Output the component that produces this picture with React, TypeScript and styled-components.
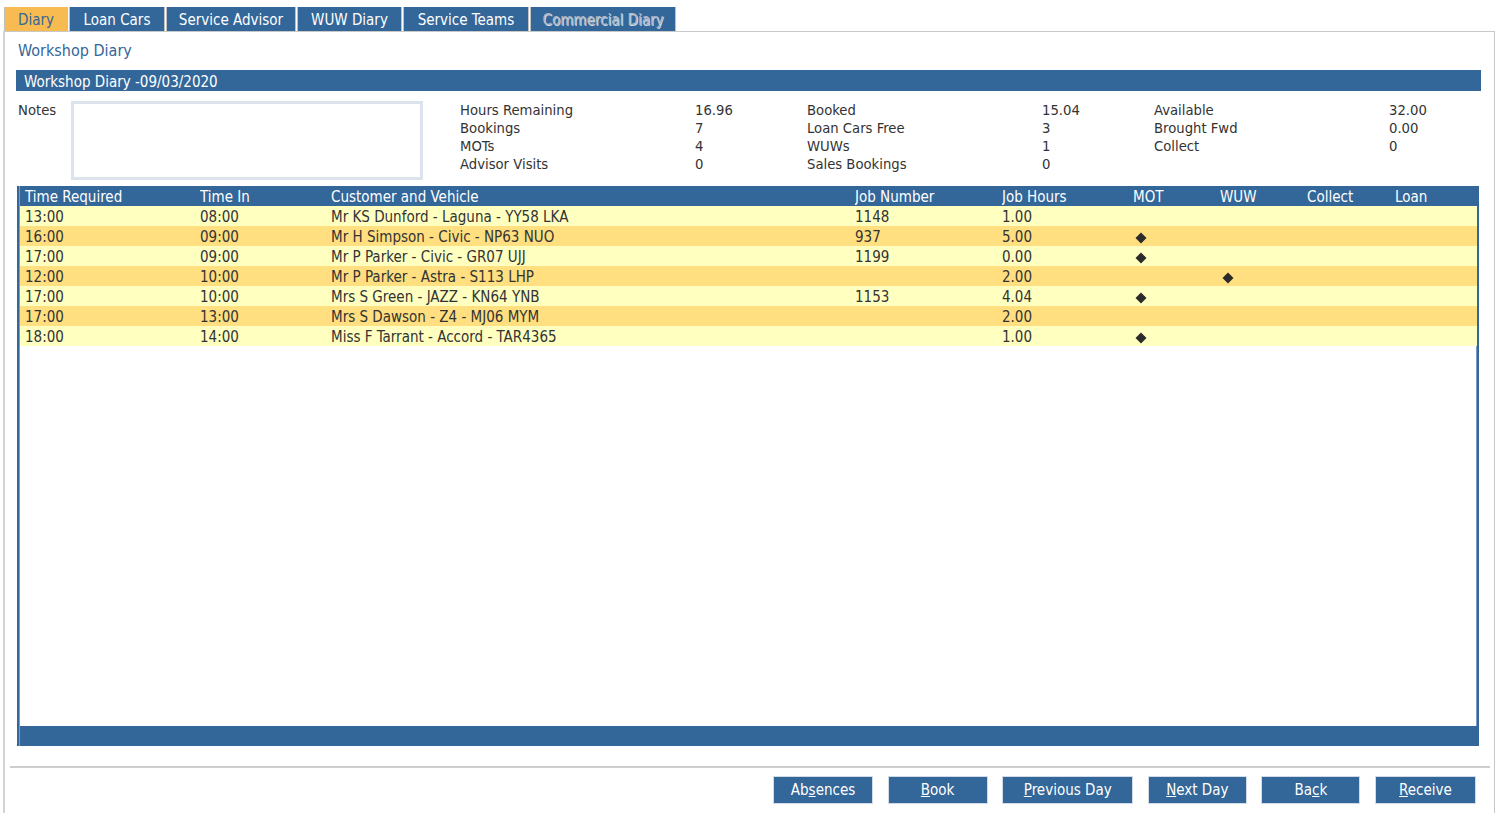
import React from "react";
import styled, { createGlobalStyle } from "styled-components";

const GlobalStyle = createGlobalStyle`
  html, body {
    margin: 0;
    padding: 0;
    background: #fff;
  }
  body {
    font-family: "DejaVu Sans Condensed", "DejaVu Sans", "Liberation Sans", sans-serif;
    font-stretch: condensed;
    color: #333;
    overflow: hidden;
  }
`;

interface Booking {
  required: string;
  timeIn: string;
  customer: string;
  jobNumber?: string;
  hours: string;
  mot?: boolean;
  wuw?: boolean;
  collect?: boolean;
  loan?: boolean;
}

const bookings: Booking[] = [
  { required: "13:00", timeIn: "08:00", customer: "Mr KS Dunford - Laguna - YY58 LKA", jobNumber: "1148", hours: "1.00" },
  { required: "16:00", timeIn: "09:00", customer: "Mr H Simpson - Civic - NP63 NUO", jobNumber: "937", hours: "5.00", mot: true },
  { required: "17:00", timeIn: "09:00", customer: "Mr P Parker - Civic - GR07 UJJ", jobNumber: "1199", hours: "0.00", mot: true },
  { required: "12:00", timeIn: "10:00", customer: "Mr P Parker - Astra - S113 LHP", hours: "2.00", wuw: true },
  { required: "17:00", timeIn: "10:00", customer: "Mrs S Green - JAZZ - KN64 YNB", jobNumber: "1153", hours: "4.04", mot: true },
  { required: "17:00", timeIn: "13:00", customer: "Mrs S Dawson - Z4 - MJ06 MYM", hours: "2.00" },
  { required: "18:00", timeIn: "14:00", customer: "Miss F Tarrant - Accord - TAR4365", hours: "1.00", mot: true },
];

const stats = [
  [
    ["Hours Remaining", "16.96"],
    ["Bookings", "7"],
    ["MOTs", "4"],
    ["Advisor Visits", "0"],
  ],
  [
    ["Booked", "15.04"],
    ["Loan Cars Free", "3"],
    ["WUWs", "1"],
    ["Sales Bookings", "0"],
  ],
  [
    ["Available", "32.00"],
    ["Brought Fwd", "0.00"],
    ["Collect", "0"],
  ],
];

const tabs = [
  { label: "Diary", width: 62, active: true },
  { label: "Loan Cars", width: 94 },
  { label: "Service Advisor", width: 128 },
  { label: "WUW Diary", width: 103 },
  { label: "Service Teams", width: 124 },
  { label: "Commercial Diary", width: 144, disabled: true },
];

const columns = "175px 131px 524px 147px 131px 87px 87px 88px 1fr";

const Page = styled.div`
  padding: 7px 1px 0 3px;
  height: 100vh;
  box-sizing: border-box;
  display: flex;
  flex-direction: column;
`;

const TabBar = styled.div`
  display: flex;
  height: 24px;
  padding-left: 1px;
`;

const Tab = styled.div<{ $active?: boolean; $disabled?: boolean; $w: number }>`
  width: ${(p) => p.$w}px;
  height: 24px;
  margin-right: 1px;
  border-left: 1px solid #bfbfbf;
  border-right: 1px solid #bfbfbf;
  background: ${(p) => (p.$active ? "#f7bb52" : "#336699")};
  color: ${(p) => (p.$active ? "#336699" : p.$disabled ? "#b4bac3" : "#fff")};
  text-shadow: ${(p) => (p.$disabled ? "1px 1px 0 rgba(255,255,255,0.75)" : "none")};
  font-size: 15px;
  line-height: 26px;
  text-align: center;
  white-space: nowrap;
  cursor: pointer;
`;

const Panel = styled.div`
  flex: 1;
  border-top: 1px solid #c8c8c8;
  border-left: 2px solid #d3d3d3;
  border-right: 1px solid #c8c8c8;
  display: flex;
  flex-direction: column;
`;

const Content = styled.div`
  padding: 0 13px 0 11px;
`;

const Title = styled.div`
  margin-top: 9px;
  padding-left: 2px;
  height: 20px;
  line-height: 20px;
  font-size: 16px;
  color: #336699;
`;

const HeaderBar = styled.div`
  margin-top: 9px;
  height: 21px;
  line-height: 24px;
  background: #336699;
  color: #fff;
  font-size: 15px;
  padding-left: 8px;
`;

const InfoSection = styled.div`
  display: flex;
  height: 85px;
  padding-top: 10px;
`;

const NotesLabel = styled.div`
  flex: 0 0 53px;
  padding-left: 2px;
  font-size: 14.7px;
  line-height: 18px;
`;

const NotesBox = styled.textarea`
  flex: 0 0 352px;
  height: 79px;
  box-sizing: border-box;
  border: 3px solid #dde3ec;
  margin: 0;
  resize: none;
  outline: none;
  font-family: inherit;
`;

const StatsGrid = styled.div`
  margin-left: 37px;
  display: flex;
  min-width: 0;
`;

const StatGroup = styled.div`
  flex-shrink: 0;
  display: grid;
  grid-template-columns: 235px 112px;
  grid-auto-rows: 18px;
  align-content: start;
  font-size: 14.7px;
  line-height: 18px;
  &:last-child {
    grid-template-columns: 235px auto;
  }
`;

const Grid = styled.div`
  margin: 0 2px 0 1px;
  height: 560px;
  border-left: 2px solid #336699;
  border-right: 2px solid #336699;
  box-shadow: inset 1px 0 0 #7c9dc6, inset -1px 0 0 #7c9dc6;
  display: flex;
  flex-direction: column;
`;

const Row = styled.div<{ $tone?: "head" | "light" | "dark" }>`
  display: grid;
  grid-template-columns: ${columns};
  box-sizing: border-box;
  height: 20px;
  line-height: 18px;
  padding: 2px 0 0 5px;
  margin-left: 1px;
  font-size: 15px;
  white-space: nowrap;
  background: ${(p) =>
    p.$tone === "head" ? "#336699" : p.$tone === "dark" ? "#ffdf80" : "#ffffc0"};
  color: ${(p) => (p.$tone === "head" ? "#fff" : "#333")};
`;

const Cell = styled.div`
  display: flex;
  align-items: flex-start;
  overflow: hidden;
`;

const Spacer = styled.div`
  flex: 1;
`;

const GridFooter = styled.div`
  height: 20px;
  margin-left: 1px;
  background: #336699;
`;

const Footer = styled.div`
  margin: 20px 4px 0 5px;
  border-top: 2px solid #cdcdcd;
  padding: 8px 14px 0 0;
  display: flex;
  justify-content: flex-end;
  gap: 14.6px;
`;

const Button = styled.button<{ $w: number }>`
  width: ${(p) => p.$w}px;
  height: 28px;
  background: #336699;
  border: 1px solid #d2dbe6;
  color: #fff;
  font-family: inherit;
  font-stretch: condensed;
  font-size: 15px;
  padding: 0;
  cursor: pointer;
`;

const Diamond = () => (
  <svg width="12" height="12" viewBox="0 0 12 12" style={{ marginTop: 4, marginLeft: 2 }}>
    <path d="M6 0.5 L11.5 6 L6 11.5 L0.5 6 Z" fill="#2b2b2b" />
  </svg>
);

const buttons: { text: React.ReactNode; width: number }[] = [
  { text: <>Ab<u>s</u>ences</>, width: 100 },
  { text: <><u>B</u>ook</>, width: 100 },
  { text: <><u>P</u>revious Day</>, width: 131 },
  { text: <><u>N</u>ext Day</>, width: 99 },
  { text: <>Ba<u>c</u>k</>, width: 99 },
  { text: <><u>R</u>eceive</>, width: 101 },
];

const headings = ["Time Required", "Time In", "Customer and Vehicle", "Job Number", "Job Hours", "MOT", "WUW", "Collect", "Loan"];

export default function App() {
  return (
    <>
      <GlobalStyle />
      <Page>
        <TabBar>
          {tabs.map((t) => (
            <Tab key={t.label} $w={t.width} $active={t.active} $disabled={t.disabled}>
              {t.label}
            </Tab>
          ))}
        </TabBar>
        <Panel>
          <Content>
            <Title>Workshop Diary</Title>
            <HeaderBar>Workshop Diary -09/03/2020</HeaderBar>
            <InfoSection>
              <NotesLabel>Notes</NotesLabel>
              <NotesBox />
              <StatsGrid>
                {stats.map((group, i) => (
                  <StatGroup key={i}>
                    {group.map(([label, value]) => (
                      <React.Fragment key={label}>
                        <div>{label}</div>
                        <div>{value}</div>
                      </React.Fragment>
                    ))}
                  </StatGroup>
                ))}
              </StatsGrid>
            </InfoSection>
            <Grid>
              <Row $tone="head">
                {headings.map((h) => (
                  <Cell key={h}>{h}</Cell>
                ))}
              </Row>
              {bookings.map((b, i) => (
                <Row key={i} $tone={i % 2 ? "dark" : "light"}>
                  <Cell>{b.required}</Cell>
                  <Cell>{b.timeIn}</Cell>
                  <Cell>{b.customer}</Cell>
                  <Cell>{b.jobNumber}</Cell>
                  <Cell>{b.hours}</Cell>
                  <Cell>{b.mot && <Diamond />}</Cell>
                  <Cell>{b.wuw && <Diamond />}</Cell>
                  <Cell>{b.collect && <Diamond />}</Cell>
                  <Cell>{b.loan && <Diamond />}</Cell>
                </Row>
              ))}
              <Spacer />
              <GridFooter />
            </Grid>
          </Content>
          <Footer>
            {buttons.map((b, i) => (
              <Button key={i} $w={b.width}>
                {b.text}
              </Button>
            ))}
          </Footer>
        </Panel>
      </Page>
    </>
  );
}
